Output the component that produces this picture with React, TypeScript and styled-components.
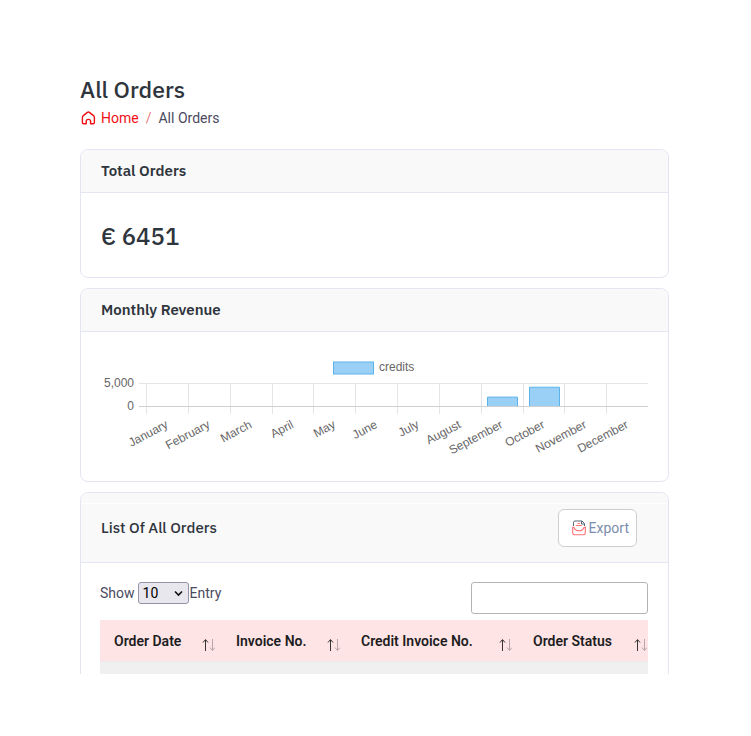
import React from "react";
import styled, { createGlobalStyle } from "styled-components";

const headingFont = `"IBM Plex Sans", "Noto Sans", sans-serif`;
const line = "#e4e5f3";

const GlobalStyle = createGlobalStyle`
  *, *::before, *::after { box-sizing: border-box; }
  body {
    margin: 0;
    background: #fff;
    color: #4b4a5e;
    font: 400 14px/20px Roboto, sans-serif;
  }
`;

const Page = styled.div`
  height: 100vh;
  padding: 74px 82px 62px 80px;
`;

const Content = styled.main`
  height: 100%;
  overflow: hidden;
`;

const Title = styled.h1`
  margin: 0 0 2px;
  color: #2f353d;
  font: 500 23px/30px ${headingFont};
`;

const Breadcrumb = styled.nav`
  display: flex;
  align-items: center;
  height: 24px;
  margin-bottom: 19px;
`;

const HomeLink = styled.a`
  display: flex;
  align-items: center;
  gap: 5px;
  padding-left: 1px;
  color: #f00f14;
  text-decoration: none;
`;

const Slash = styled.span`
  margin: 0 7px;
  color: #ee7a80;
`;

const Card = styled.section`
  overflow: hidden;
  margin-bottom: 10px;
  border: 1px solid ${line};
  border-radius: 8px;
  background: #fff;
`;

const CardHeader = styled.header<{ $tall?: boolean }>`
  position: relative;
  display: flex;
  align-items: center;
  justify-content: space-between;
  height: ${(p) => (p.$tall ? 70 : 43)}px;
  padding: 0 31px 0 20px;
  border-bottom: 1px solid ${line};
  background: #f9f9f9;
`;

const Seam = styled.i`
  position: absolute;
  inset: 10px 0 auto;
  height: 1px;
  background: #fff;
`;

const CardTitle = styled.h2<{ $medium?: boolean }>`
  margin: 0;
  color: #2f353d;
  font: ${(p) => (p.$medium ? 500 : 600)} 15px/20px ${headingFont};
`;

const CardBody = styled.div<{ $compact?: boolean }>`
  padding: ${(p) => (p.$compact ? "19px 20px 20px 19px" : "20px")};
`;

const Amount = styled.p`
  margin: 9px 0 7px;
  color: #2f353d;
  font: 500 24px/28px ${headingFont};
`;

const Chart = styled.svg`
  display: block;
  width: 100%;
  height: auto;
  overflow: visible;
  font: 12px "Liberation Sans", Arial, sans-serif;
  fill: #666;
`;

const ExportButton = styled.button`
  display: flex;
  align-items: center;
  gap: 3px;
  height: 38px;
  padding: 0 7px 0 13px;
  border: 1px solid #cfcfd2;
  border-radius: 6px;
  background: #fff;
  color: #7b8dab;
  font: inherit;
`;

const Toolbar = styled.div`
  display: flex;
  justify-content: space-between;
  margin-bottom: 6px;
`;

const LengthLabel = styled.label`
  display: flex;
  align-items: center;
  height: 22px;
`;

const SelectWrap = styled.span`
  position: relative;
  display: flex;
  margin: 0 1px 0 3px;
`;

const LengthSelect = styled.select`
  appearance: none;
  width: 51px;
  height: 22px;
  padding: 0 4px;
  border: 1px solid #9693a8;
  border-radius: 3px;
  background: #e8e7ee;
  color: #000;
  font: inherit;
`;

const SelectArrow = styled.svg`
  position: absolute;
  top: 8px;
  right: 6px;
  pointer-events: none;
`;

const Search = styled.input`
  width: 177px;
  height: 32px;
  padding: 4px 8px;
  border: 1px solid #b4b4b4;
  border-radius: 3px;
  background: #fff;
  font: inherit;
`;

const TableScroll = styled.div`
  overflow: hidden;
`;

const Table = styled.table`
  border-collapse: collapse;
  table-layout: fixed;
  width: max-content;
`;

const HeadCell = styled.th<{ $width: number }>`
  width: ${(p) => p.$width}px;
  height: 41px;
  padding: 2px 7px 0 14px;
  background: #ffe4e5;
  color: #1d1d1f;
  font-weight: 600;
  text-align: left;
`;

const HeadInner = styled.div`
  display: flex;
  align-items: center;
  justify-content: space-between;
  white-space: nowrap;

  svg {
    margin-top: 8px;
  }
`;

const BodyCell = styled.td`
  height: 41px;
  border-top: 1px solid #e9e9ee;
  background: #f0f0f0;
`;

const months = [
  "January", "February", "March", "April", "May", "June",
  "July", "August", "September", "October", "November", "December",
];
const credits = [0, 0, 0, 0, 0, 0, 0, 0, 2151, 4300, 0, 0];

const columns = [
  { name: "Order Date", width: 122 },
  { name: "Invoice No.", width: 125 },
  { name: "Credit Invoice No.", width: 172 },
  { name: "Order Status", width: 135 },
];

function RevenueChart() {
  const left = 45;
  const right = 547;
  const top = 31;
  const base = 54;
  const step = (right - left) / months.length;
  return (
    <Chart viewBox="0 0 547 109" role="img" aria-label="Monthly credits">
      <rect x="232.5" y="10" width="40" height="12" fill="#9ad0f5" stroke="#5cb3ec" />
      <text x="278" y="19">credits</text>
      <g stroke="#e5e5e5" shapeRendering="crispEdges">
        <path d={`M38 ${top}H${right}`} />
        {months.map((m, i) => (
          <path key={m} d={`M${Math.round(left + i * step) + 0.5} ${top}V62`} />
        ))}
      </g>
      {credits.map((value, i) => {
        if (!value) return null;
        const x = Math.round(left + i * step) + 6.5;
        const y = base + 1 - (value / 5000) * 23;
        return (
          <g key={months[i]}>
            <rect x={x} y={y} width="30" height={base - y} fill="#9ad0f5" />
            <path d={`M${x} ${base}V${y}h30V${base}`} fill="none" stroke="#5cb3ec" />
          </g>
        );
      })}
      <path d={`M38 ${base}H${right}`} stroke="#cfcfcf" shapeRendering="crispEdges" />
      <text x="33" y="35" textAnchor="end">5,000</text>
      <text x="33" y="58" textAnchor="end">0</text>
      {months.map((m, i) => (
        <text
          key={m}
          textAnchor="end"
          transform={`translate(${left + (i + 0.5) * step + 2} 75) rotate(-28)`}
        >
          {m}
        </text>
      ))}
    </Chart>
  );
}

const HomeIcon = () => (
  <svg width="15" height="14" viewBox="0 0 15 14" fill="none" stroke="currentColor" strokeWidth="1.4" strokeLinejoin="round" aria-hidden="true">
    <path d="M5.2 12.8H2.7Q1.4 12.8 1.4 11.4V6.3Q1.4 5.5 2 4.9L6.4 1.4Q7.4.7 8.4 1.4L12.8 4.9Q13.4 5.5 13.4 6.3V11.4Q13.4 12.8 12.1 12.8H9.6V10.4Q9.6 8.4 7.4 8.4T5.2 10.4Z" />
  </svg>
);

const ExportIcon = () => (
  <svg width="14" height="16" viewBox="0 0 14 16" fill="none" aria-hidden="true">
    <path d="M1.5 6V2.5Q1.5 1 3 1H10L12.5 3.5V6" stroke="#596572" />
    <path d="M9.5 1V4H12.5" stroke="#596572" />
    <path d="M5.5 3.5H8M3.8 5.5H9.8" stroke="#ff7276" />
    <path d="M.7 6.5V13Q.7 14.7 2.4 14.7H11.6Q13.3 14.7 13.3 13V6.5M.7 7.5H2Q3.2 10.8 7 10.8T12 7.5H13.3" stroke="#ff7276" strokeWidth="1.1" />
  </svg>
);

const SortIcon = () => (
  <svg width="13" height="14" viewBox="0 0 13 14" fill="none" aria-hidden="true">
    <path d="M3.5 13V2M1 4.5L3.5 1.5L6 4.5" stroke="#383334" />
    <path d="M10.5 1V12M8 9.5L10.5 12.5L13 9.5" stroke="#b8a5a6" />
  </svg>
);

export default function App() {
  return (
    <Page>
      <GlobalStyle />
      <Content>
        <Title>All Orders</Title>
        <Breadcrumb aria-label="Breadcrumb">
          <HomeLink href="#">
            <HomeIcon />
            Home
          </HomeLink>
          <Slash>/</Slash>
          <span>All Orders</span>
        </Breadcrumb>

        <Card>
          <CardHeader>
            <CardTitle>Total Orders</CardTitle>
          </CardHeader>
          <CardBody>
            <Amount>€ 6451</Amount>
          </CardBody>
        </Card>

        <Card>
          <CardHeader>
            <CardTitle>Monthly Revenue</CardTitle>
          </CardHeader>
          <CardBody>
            <RevenueChart />
          </CardBody>
        </Card>

        <Card>
          <CardHeader $tall>
            <Seam />
            <CardTitle $medium>List Of All Orders</CardTitle>
            <ExportButton type="button">
              <ExportIcon />
              Export
            </ExportButton>
          </CardHeader>
          <CardBody $compact>
            <Toolbar>
              <LengthLabel>
                Show
                <SelectWrap>
                  <LengthSelect defaultValue="10">
                    <option>10</option>
                    <option>25</option>
                    <option>50</option>
                  </LengthSelect>
                  <SelectArrow width="9" height="7" viewBox="0 0 9 7" fill="none" stroke="#111" strokeWidth="1.6">
                    <path d="M1 1.5L4.5 5L8 1.5" />
                  </SelectArrow>
                </SelectWrap>
                Entry
              </LengthLabel>
              <Search type="search" aria-label="Search orders" />
            </Toolbar>
            <TableScroll>
              <Table>
                <thead>
                  <tr>
                    {columns.map((c) => (
                      <HeadCell key={c.name} $width={c.width} scope="col">
                        <HeadInner>
                          {c.name}
                          <SortIcon />
                        </HeadInner>
                      </HeadCell>
                    ))}
                  </tr>
                </thead>
                <tbody>
                  <tr>
                    {columns.map((c) => (
                      <BodyCell key={c.name} />
                    ))}
                  </tr>
                </tbody>
              </Table>
            </TableScroll>
          </CardBody>
        </Card>
      </Content>
    </Page>
  );
}
